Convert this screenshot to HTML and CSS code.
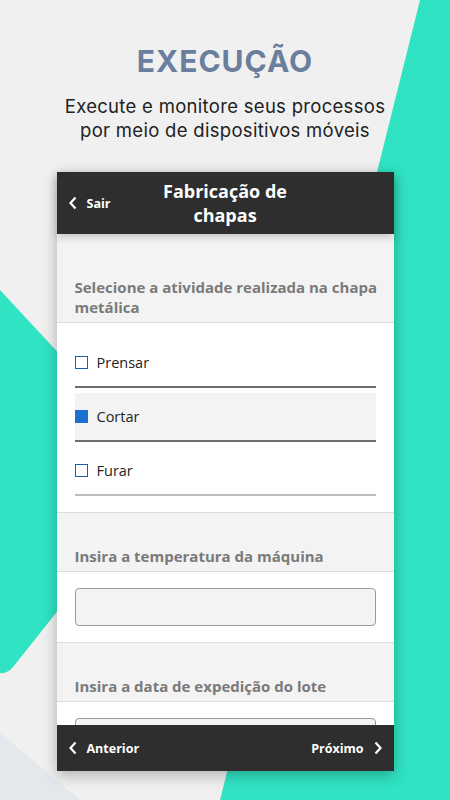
FILE: index.html
```html
<!DOCTYPE html>
<html lang="pt-BR">
<head>
    <meta charset="UTF-8">
    <meta name="viewport" content="width=device-width, initial-scale=1.0">
    <title>Execução</title>
    <link rel="stylesheet" href="styles.css">
</head>
<body>
    <div class="screen">
        <!-- Fond décoratif -->
        <svg class="backdrop" viewBox="0 0 450 800" preserveAspectRatio="none" aria-hidden="true">
            <rect width="450" height="800" fill="#f0f0f0"/>
            <polygon points="0,733 80,800 0,800" fill="#e4e7eb"/>
            <polygon points="420,0 450,0 450,800 220,800" fill="#30e3c3"/>
            <path d="M0,290 L130,430 L130,520 L13,667 Q7,674 0,673 Z" fill="#30e3c3"/>
        </svg>

        <!-- Intro -->
        <div class="intro">
            <h1>EXECUÇÃO</h1>
            <p>Execute e monitore seus processos<br>por meio de dispositivos móveis</p>
        </div>

        <!-- Téléphone -->
        <div class="phone">
            <div class="app-bar">
                <a class="nav-link">
                    <svg class="chevron" viewBox="0 0 8 14"><polyline points="6.5,1.5 1.5,7 6.5,12.5"/></svg>
                    Sair
                </a>
                <h2 class="app-title">Fabricação de chapas</h2>
                <span></span>
            </div>

            <div class="app-body">
                <section class="field">
                    <h3 class="field-label">Selecione a atividade realizada na chapa metálica</h3>
                    <div class="field-panel options">
                        <label class="option">
                            <span class="check"></span> Prensar
                        </label>
                        <label class="option selected">
                            <span class="check checked"></span> Cortar
                        </label>
                        <label class="option light">
                            <span class="check"></span> Furar
                        </label>
                    </div>
                </section>

                <section class="field">
                    <h3 class="field-label">Insira a temperatura da máquina</h3>
                    <div class="field-panel">
                        <div class="text-input"></div>
                    </div>
                </section>

                <section class="field">
                    <h3 class="field-label">Insira a data de expedição do lote</h3>
                    <div class="field-panel">
                        <div class="text-input"></div>
                    </div>
                </section>
            </div>

            <div class="app-foot">
                <a class="nav-link">
                    <svg class="chevron" viewBox="0 0 8 14"><polyline points="6.5,1.5 1.5,7 6.5,12.5"/></svg>
                    Anterior
                </a>
                <a class="nav-link">
                    Próximo
                    <svg class="chevron" viewBox="0 0 8 14"><polyline points="1.5,1.5 6.5,7 1.5,12.5"/></svg>
                </a>
            </div>
        </div>
    </div>
</body>
</html>
```

FILE: styles.css
```css
/* CSS */
body {
    margin: 0;
    padding: 0;
    background-color: #f0f0f0;
}

.screen {
    position: relative;
    width: 450px;
    height: 800px;
    overflow: hidden;
    display: flex;
    flex-direction: column;
    align-items: center;
}

.backdrop {
    position: absolute;
    top: 0;
    left: 0;
    width: 450px;
    height: 800px;
}

.intro {
    position: relative;
    text-align: center;
    padding-top: 43px;
}

.intro h1 {
    margin: 0;
    font-family: Inter, sans-serif;
    font-weight: 700;
    font-size: 30px;
    line-height: 36px;
    letter-spacing: 1px;
    color: #6a7e9d;
}

.intro p {
    margin: 15px 0 0;
    font-family: Inter, sans-serif;
    font-size: 18.5px;
    line-height: 24px;
    letter-spacing: 0.3px;
    color: #222;
}

.phone {
    position: relative;
    margin-top: 30px;
    width: 337px;
    height: 599px;
    display: flex;
    flex-direction: column;
    background-color: #f3f3f3;
    box-shadow: 0 4px 14px rgba(0, 0, 0, 0.28);
    font-family: "Open Sans", sans-serif;
}

.app-bar {
    display: grid;
    grid-template-columns: 1fr 150px 1fr;
    align-items: center;
    height: 62px;
    background-color: #2e2e2e;
    color: white;
    padding: 0 12px;
    box-shadow: 0 3px 8px rgba(0, 0, 0, 0.2);
    position: relative;
    z-index: 1;
}

.app-title {
    margin: 0;
    text-align: center;
    font-size: 18px;
    line-height: 24px;
    font-weight: 700;
}

.nav-link {
    display: flex;
    align-items: center;
    gap: 10px;
    font-size: 12.5px;
    font-weight: 700;
    color: white;
}

.chevron {
    width: 8px;
    height: 14px;
    fill: none;
    stroke: white;
    stroke-width: 2.2;
}

.app-body {
    flex: 1;
    overflow: hidden;
    padding-top: 10px;
}

.field-label {
    margin: 0;
    padding: 33px 8px 5px 18px;
    font-size: 15px;
    line-height: 20px;
    font-weight: 700;
    color: #7a7a7a;
}

.field-panel {
    background-color: white;
    border-top: 1px solid #dcdcdc;
    border-bottom: 1px solid #dcdcdc;
    padding: 16px 18px;
}

.options {
    display: flex;
    flex-direction: column;
    gap: 5px;
    padding-top: 16px;
}

.option {
    display: flex;
    align-items: center;
    gap: 9px;
    height: 47px;
    border-bottom: 2px solid #6e6e6e;
    font-size: 14.5px;
    color: #222;
}

.option.selected {
    background-color: #f3f3f3;
}

.option.light {
    border-bottom-color: #bdbdbd;
}

.check {
    width: 11px;
    height: 11px;
    border: 1.5px solid #1d5fae;
    background-color: white;
}

.check.checked {
    background-color: #1b6fd1;
    border-color: #1b6fd1;
}

.text-input {
    height: 36px;
    background-color: #f3f3f3;
    border: 1px solid #9a9a9a;
    border-radius: 4px;
}

.app-foot {
    display: flex;
    align-items: center;
    justify-content: space-between;
    height: 46px;
    padding: 0 12px;
    background-color: #2e2e2e;
    position: relative;
}
```
